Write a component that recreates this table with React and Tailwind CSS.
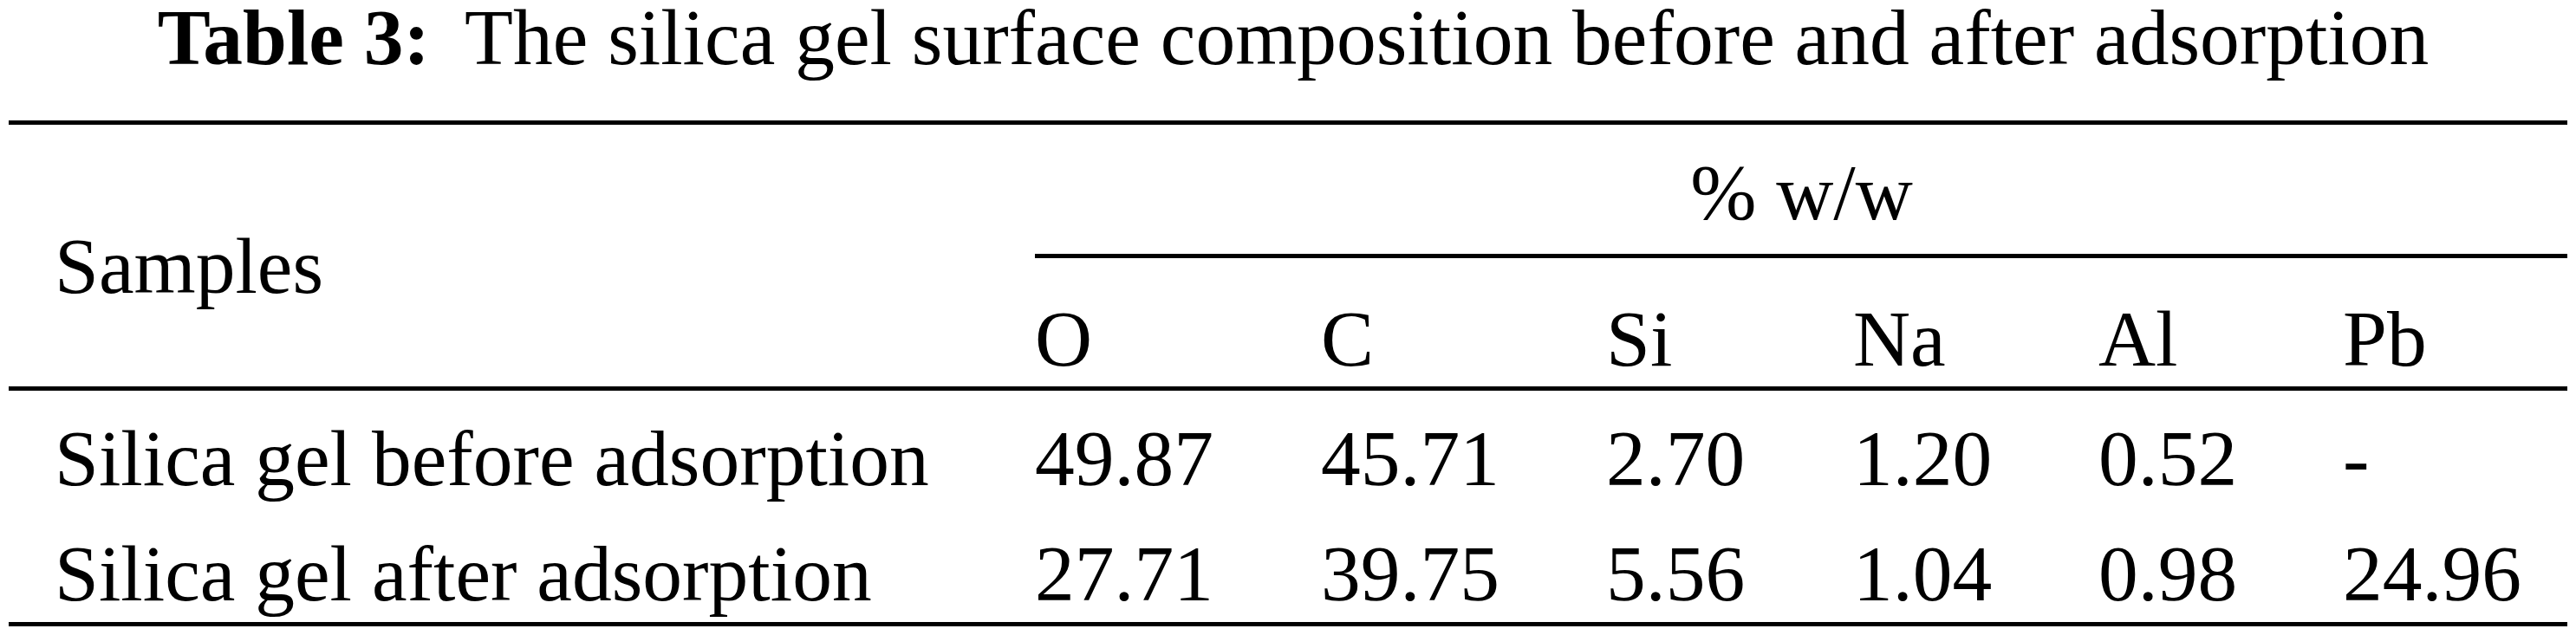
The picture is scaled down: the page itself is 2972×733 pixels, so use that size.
import React from "react";

const elements = ["O", "C", "Si", "Na", "Al", "Pb"];

const rows = [
  { name: "Silica gel before adsorption", values: ["49.87", "45.71", "2.70", "1.20", "0.52", "-"] },
  { name: "Silica gel after adsorption", values: ["27.71", "39.75", "5.56", "1.04", "0.98", "24.96"] },
];

const cols = "grid grid-cols-[1184px_330px_329px_285px_283px_282px_1fr]";

const App = () => {
  return (
    <div className="min-h-screen bg-white text-black [font-family:'Liberation_Serif',serif] text-[91.5px] leading-[90px]">
      {/* Caption */}
      <h1 className="text-center leading-[87px] font-normal pl-[12px]">
        <span className="font-bold">Table 3:</span>
        <span className="ml-[40px]">The silica gel surface composition before and after adsorption</span>
      </h1>

      <div className="ml-[10px] w-[2952px] mt-[52px] border-t-[5px] border-black">
        {/* Header */}
        <div className={cols}>
          <div className="row-span-2 pl-[53px] pt-[118px]">Samples</div>
          <div className="col-span-6 text-center pt-[33px] pb-[26px] border-b-[5px] border-black pl-[1px]">
            % w/w
          </div>
          {elements.map((el) => (
            <div key={el} className="pt-[48px] pb-[10px]">
              {el}
            </div>
          ))}
        </div>

        {/* Body */}
        <div className="border-t-[5px] border-black border-b-[5px]">
          {rows.map((row, i) => (
            <div key={row.name} className={`${cols} ${i === 0 ? "h-[133px]" : "h-[134px]"}`}>
              <div className="pl-[53px] pt-[33px]">{row.name}</div>
              {row.values.map((v, j) => (
                <div key={j} className="pt-[33px]">
                  {v}
                </div>
              ))}
            </div>
          ))}
        </div>
      </div>
    </div>
  );
};

export default App;
